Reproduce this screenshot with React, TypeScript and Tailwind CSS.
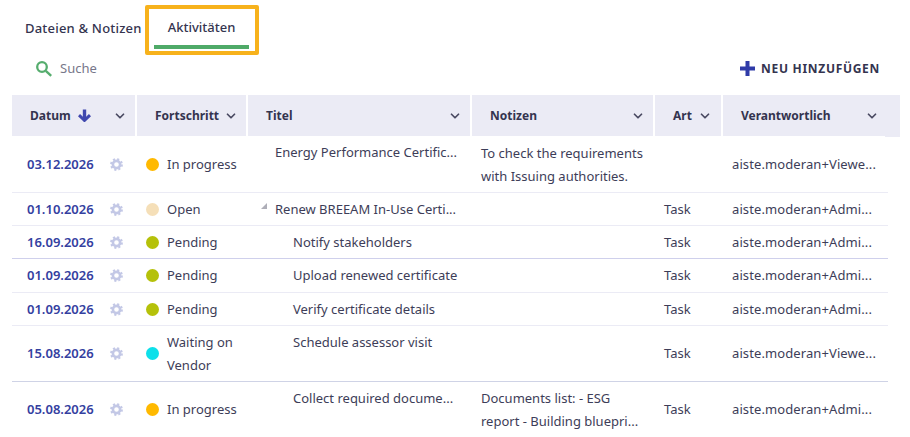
import React from 'react';
import { ChevronDown } from 'lucide-react';

const cols = 'grid grid-cols-[123px_109px_222px_181px_66px_162px]';
const headCols = 'grid grid-cols-[123px_109px_222px_181px_66px_177px]';

const Dot = ({ color }: { color: string }) => (
  <span className={`w-[13px] h-[13px] rounded-full shrink-0 ${color}`}></span>
);

const Gear = () => (
  <svg width="13" height="13" viewBox="0 0 13 13" className="shrink-0">
    <circle cx="6.5" cy="6.5" r="3.6" fill="none" stroke="#c3c8e6" strokeWidth="2.6" />
    <circle cx="6.5" cy="6.5" r="5.4" fill="none" stroke="#c3c8e6" strokeWidth="2" strokeDasharray="2.1 2.14" />
  </svg>
);

const SortArrow = () => (
  <svg width="13" height="13" viewBox="0 0 13 13" className="shrink-0">
    <path d="M6.5 0.5V11" fill="none" stroke="#3f47ae" strokeWidth="3.4" />
    <path d="M1 6.2L6.5 11.4L12 6.2" fill="none" stroke="#3f47ae" strokeWidth="3" />
  </svg>
);

const SearchIcon = () => (
  <svg width="17" height="16" viewBox="0 0 17 16" className="shrink-0">
    <circle cx="6" cy="6" r="4.8" fill="none" stroke="#56ad6e" strokeWidth="2.3" />
    <path d="M9.8 9.8L15.2 14.8" fill="none" stroke="#56ad6e" strokeWidth="2.4" />
  </svg>
);

const PlusIcon = () => (
  <svg width="15" height="15" viewBox="0 0 15 15" className="shrink-0">
    <path d="M7.5 0V15M0 7.5H15" fill="none" stroke="#2f3ba8" strokeWidth="4" />
  </svg>
);

const HeadCell = ({ label, gap, pad, sort, notch }: { label: string; gap?: string; pad: string; sort?: boolean; notch?: boolean }) => (
  <div className={`relative bg-[#ebebf5] h-[41px] flex items-center ${pad} ${gap ? gap : 'justify-between'}`}>
    <span className="flex items-center gap-[7px] font-bold text-[12px] text-[#34344f]">
      {label}
      {sort && <SortArrow />}
    </span>
    <ChevronDown size={14} strokeWidth={3} className="text-[#4a4a62]" />
    {notch && <span className="absolute right-0 bottom-[-1px] w-[15px] h-px bg-[#ebebf5]"></span>}
  </div>
);

type Row = {
  date: string;
  dot: string;
  status: React.ReactNode;
  title: string;
  indent?: boolean;
  arrow?: boolean;
  notes?: React.ReactNode;
  art?: string;
  owner: string;
  h: string;
  border: string;
  titleTop?: boolean;
};

const rows: Row[] = [
  {
    date: '03.12.2026', dot: 'bg-[#ffb900]', status: 'In progress', title: 'Energy Performance Certific...',
    notes: <>To check the requirements<br />with Issuing authorities.</>, owner: 'aiste.moderan+Viewe...',
    h: 'h-[57px]', border: 'border-[#ebebf5]', titleTop: true,
  },
  {
    date: '01.10.2026', dot: 'bg-[#f5dfb8]', status: 'Open', title: 'Renew BREEAM In-Use Certi...', arrow: true,
    art: 'Task', owner: 'aiste.moderan+Admi...', h: 'h-[33px]', border: 'border-[#ebebf5]',
  },
  {
    date: '16.09.2026', dot: 'bg-[#b5c10a]', status: 'Pending', title: 'Notify stakeholders', indent: true,
    art: 'Task', owner: 'aiste.moderan+Admi...', h: 'h-[33px]', border: 'border-[#cfd0ec]',
  },
  {
    date: '01.09.2026', dot: 'bg-[#b5c10a]', status: 'Pending', title: 'Upload renewed certificate', indent: true,
    art: 'Task', owner: 'aiste.moderan+Admi...', h: 'h-[34px]', border: 'border-[#ebebf5]',
  },
  {
    date: '01.09.2026', dot: 'bg-[#b5c10a]', status: 'Pending', title: 'Verify certificate details', indent: true,
    art: 'Task', owner: 'aiste.moderan+Admi...', h: 'h-[33px]', border: 'border-[#ebebf5]',
  },
  {
    date: '15.08.2026', dot: 'bg-[#0de0ea]', status: <>Waiting on<br />Vendor</>, title: 'Schedule assessor visit', indent: true,
    art: 'Task', owner: 'aiste.moderan+Viewe...', h: 'h-[56px]', border: 'border-[#cfd3e6]', titleTop: true,
  },
  {
    date: '05.08.2026', dot: 'bg-[#ffb900]', status: 'In progress', title: 'Collect required docume...', indent: true,
    notes: <>Documents list: - ESG<br />report - Building bluepri...</>,
    art: 'Task', owner: 'aiste.moderan+Admi...', h: 'h-[56px]', border: 'border-transparent', titleTop: true,
  },
];

export default function App() {
  return (
    <div className="w-[910px] h-[437px] overflow-hidden bg-white text-[13px] text-[#3d3d58] font-['Noto_Sans',sans-serif]">
      {/* tabs */}
      <div className="flex h-[50px] pt-[5px] pl-[25px]">
        <div className="pt-[14px] w-[120px] font-medium text-[13px] tracking-[0.2px] text-[#34344f] whitespace-nowrap">Dateien &amp; Notizen</div>
        <div className="w-[114px] h-[50px] border-[4px] border-[#f7b21c] rounded-[2px] pl-[5px] pr-[6px] flex flex-col">
          <div className="h-[36px] pt-[9px] text-center font-medium text-[13px] text-[#34344f]">Aktivitäten</div>
          <div className="h-[4px] bg-[#4faa68]"></div>
        </div>
      </div>

      {/* toolbar */}
      <div className="flex items-center justify-between h-[40px] pl-[36px] pr-[30px] pb-[3px]">
        <div className="flex items-center gap-[7px] text-[#77778a]">
          <SearchIcon />
          <span>Suche</span>
        </div>
        <div className="flex items-center gap-[6px] font-bold text-[12px] tracking-[0.7px] text-[#34344f]">
          <PlusIcon />
          NEU HINZUFÜGEN
        </div>
      </div>

      {/* table */}
      <div className="mx-[12px] mt-[5px] w-[876px]">
        <div className={`${headCols} gap-x-[2px] w-[888px]`}>
          <HeadCell label="Datum" sort pad="pl-[18px] pr-[8px]" />
          <HeadCell label="Fortschritt" gap="gap-[5px]" pad="pl-[18px]" />
          <HeadCell label="Titel" pad="pl-[18px] pr-[8px]" />
          <HeadCell label="Notizen" pad="pl-[18px] pr-[8px]" />
          <HeadCell label="Art" gap="gap-[6px]" pad="pl-[18px]" />
          <HeadCell label="Verantwortlich" notch pad="pl-[18px] pr-[21px]" />
        </div>
        {rows.map((r, i) => (
          <div key={i} className={`${cols} gap-x-[2px] ${r.h} border-b ${r.border} leading-[23px]`}>
            <div className="flex items-center justify-between pl-[15px] pr-[12px]">
              <span className="font-semibold text-[#34409f]">{r.date}</span>
              <Gear />
            </div>
            <div className="flex items-center gap-[8px] pl-[9px]">
              <Dot color={r.dot} />
              <span>{r.status}</span>
            </div>
            <div className={`flex whitespace-nowrap ${r.titleTop ? 'items-start pt-[5px]' : 'items-center'} ${r.indent ? 'pl-[45px]' : 'pl-[27px]'} relative`}>
              {r.arrow && (
                <span className="absolute left-[13px] top-[10px] w-0 h-0 border-l-[6px] border-l-transparent border-b-[6px] border-b-[#aeaeb8]"></span>
              )}
              {r.title}
            </div>
            <div className="flex items-center pl-[9px] pt-px">{r.notes && <span>{r.notes}</span>}</div>
            <div className="flex items-center pl-[9px]">{r.art}</div>
            <div className="flex items-center pl-[9px] whitespace-nowrap tracking-[0.1px]">{r.owner}</div>
          </div>
        ))}
      </div>
    </div>
  );
}
